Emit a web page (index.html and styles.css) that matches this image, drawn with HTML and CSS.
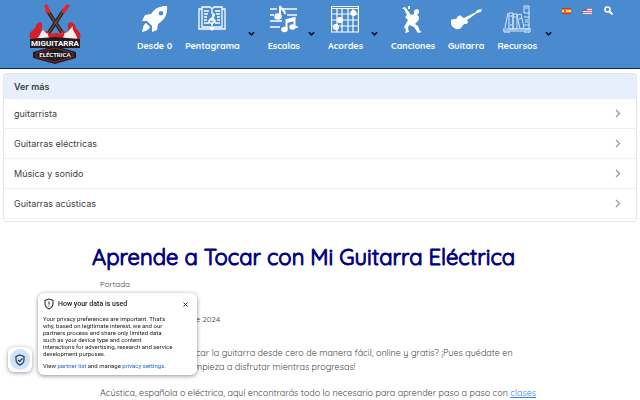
FILE: index.html
```html
<!DOCTYPE html>
<html lang="es">
<head>
  <meta charset="UTF-8">
  <meta name="viewport" content="width=device-width, initial-scale=1">
  <title>Aprende a Tocar con Mi Guitarra Eléctrica</title>
  <link rel="stylesheet" href="styles.css">
</head>
<body>

  <!-- Cabecera -->
  <header class="header">
    <a class="logo" href="#" aria-label="Mi Guitarra Eléctrica">
      <svg width="56" height="62" viewBox="0 0 56 62">
        <path d="M20 7 38 34M37 7 19 34" stroke="#30231f" stroke-width="4"/>
        <path d="M20 7 38 34M37 7 19 34" stroke="#756052" stroke-width="1"/>
        <path d="m17 2 3-1 4 8-4 2zM34 8l6-7 3 2-6 8z" fill="#e32632"/>
        <path d="M3 35c-2-5 2-7 5-10 1-5 6-8 7-4 1 4-2 6 1 8l5-1 3 10-18 3z" fill="#d71f2b"/>
        <path d="M53 35c2-5-2-7-4-10-1-5-6-8-8-4-1 4 2 6-1 8l-5-1-3 10 18 3z" fill="#d71f2b"/>
        <path d="M10 35c3-1 3-6 6-8l3 3 9 2 9-2c5 0 6-5 9-7-2 5 5 8 4 14z" fill="#f2efef"/>
        <path d="m20 29 4 2 5-1 5 1 4-2-2 6H22z" fill="#d71f2b"/>
        <path d="M6 49 28 43l21 6v6l-21 6-22-6z" fill="#211b20"/>
        <path d="m9 50 19-5 18 5v4l-18 5-19-5z" fill="none" stroke="#8a272d"/>
        <path d="M3 36 28 34l25 2v9H3z" fill="#211b20"/>
        <text class="logo-name" x="28" y="43" text-anchor="middle">MIGUITARRA</text>
        <text class="logo-sub" x="28" y="54" text-anchor="middle">ELÉCTRICA</text>
      </svg>
    </a>

    <nav class="nav">
      <a class="nav-item" href="#">
        <svg viewBox="0 0 28 28" fill="#fff"><path d="M26 1c1 9-3 14-9 18l-1 6-5 2v-6l-5-5H1l3-6 6-1C14 3 19 1 26 1zM20 6a2.300 2.300 0 1 0 0 4.600A2.300 2.300 0 0 0 20 6zM5 18l4 4c-1 3-4 4-8 5 1-4 1-7 4-9z" fill-rule="evenodd"/></svg>
        <span>Desde 0</span>
      </a>
      <div class="nav-group">
        <a class="nav-item" href="#">
          <svg viewBox="0 0 28 28" fill="none" stroke="#fff" stroke-width="1.300"><path d="M4 4H1v20h11l2 1 2-1h11V4h-3M4 22V2h8l2 2 2-2h8v20h-8l-2 2-2-2zM14 4v5M14 19v5M6 6h5M6 9h4M6 12h3M6 15h3M6 18h5M17 6h5M18 9h4M19 12h3M19 15h3M17 18h5"/><path d="M13 19c3 0 3-2 2-7-1-4 2-4 1-1-1 2-6 3-5 6 1 2 6 1 6-1s-4-2-4 0" stroke-width="1.500"/></svg>
          <span>Pentagrama</span>
        </a>
        <button class="toggle" aria-label="Abrir Pentagrama"><svg viewBox="0 0 8 6"><path d="m1 1 3 3 3-3"/></svg></button>
      </div>
      <div class="nav-group">
        <a class="nav-item" href="#">
          <svg viewBox="0 0 28 28" fill="none" stroke="#fff" stroke-width="1.500"><path d="M0 4h7M13 4h14M0 10h4M17 10h10M0 16h12M0 22h10M25 22h3"/><path d="M10 11V1c1 4 5 3 5 8M16.500 24v-9l8-2v9M16.500 17l8-2" stroke-width="2"/><ellipse cx="8" cy="11.500" rx="3" ry="2.500" fill="#fff"/><ellipse cx="14.500" cy="24.500" rx="2.500" ry="2" fill="#fff"/><ellipse cx="22.500" cy="22" rx="2.500" ry="2" fill="#fff"/></svg>
          <span>Escalas</span>
        </a>
        <button class="toggle" aria-label="Abrir Escalas"><svg viewBox="0 0 8 6"><path d="m1 1 3 3 3-3"/></svg></button>
      </div>
      <div class="nav-group">
        <a class="nav-item" href="#">
          <svg viewBox="0 0 28 28" fill="none" stroke="#fff"><path d="M0 1.500h28M0 3.500h28M.5 1v26h27V1M6 3v24M11 3v24M17 3v24M22 3v24M0 9h28M0 15h28M0 21h28" stroke-width="1.200"/><g fill="#fff"><circle cx="22.500" cy="8" r="2.700"/><circle cx="9" cy="15" r="2.700"/><circle cx="5" cy="22" r="2.700"/></g></svg>
          <span>Acordes</span>
        </a>
        <button class="toggle" aria-label="Abrir Acordes"><svg viewBox="0 0 8 6"><path d="m1 1 3 3 3-3"/></svg></button>
      </div>
      <a class="nav-item" href="#">
        <svg viewBox="0 0 28 28" fill="#fff"><path d="m7 3 5 7 3-1V6l2-2 3 1v3l-2 2c2 1 3 3 1 6l-3 3 3 2 2 5 2 1-4 1-4-6-5-2-1 3 1 4-4 1 1-3-2-3 4-7-3-3 2-2-3-6z"/><path d="m3 4 2-2 2 1-2 1zM9 1h2v3H9z"/></svg>
        <span>Canciones</span>
      </a>
      <a class="nav-item" href="#">
        <svg class="wide" viewBox="0 0 32 28" fill="#fff"><path d="m14 13 12-6 1-2 5-1-1 3-4 1-10 7c2 2 1 4-2 4s-2 4-6 5c-5 1-9-4-8-8 0-3 5-1 6-3 1-3 4-3 5-1z"/></svg>
        <span>Guitarra</span>
      </a>
      <div class="nav-group">
        <a class="nav-item" href="#">
          <svg viewBox="0 0 28 28" fill="none" stroke="#d7eaff" stroke-width="1"><path d="M0 24h28v2H0zM2 26v2h4v-2M22 26v2h4v-2M6 8h4v16H6zM10 9h4v15h-4zM2 23 5 8M14 10l4-1 3 14-4 1zM16 14l3-1M11 12h2M7 11h2M7 20h2M21 8h5v16h-5M21 12h5M21 20h5M21 8V1h5v7M22 3h3M22 15h3M22 17h3"/></svg>
          <span>Recursos</span>
        </a>
        <button class="toggle" aria-label="Abrir Recursos"><svg viewBox="0 0 8 6"><path d="m1 1 3 3 3-3"/></svg></button>
      </div>
    </nav>

    <div class="tools">
      <a href="#" aria-label="Español"><svg width="9" height="6" viewBox="0 0 9 6"><path fill="#d52b2b" d="M0 0h9v6H0z"/><path fill="#ffd33d" d="M0 1.500h9v3H0z"/><path fill="#b9652b" d="M2 2h2v2H2z"/></svg></a>
      <a href="#" aria-label="English"><svg width="9" height="6" viewBox="0 0 9 6"><path fill="#f3dfe4" d="M0 0h9v6H0z"/><path stroke="#d76b7d" d="M0 .5h9M0 2.500h9M0 4.500h9"/><path fill="#6677b5" d="M0 0h4v3H0z"/></svg></a>
      <button class="search" aria-label="Buscar"><svg width="9" height="9" viewBox="0 0 9 9"><circle cx="3.500" cy="3.500" r="2.500" fill="none" stroke="#fff" stroke-width="1.600"/><path d="m5.500 5.500 3 3" stroke="#fff" stroke-width="2"/></svg></button>
    </div>
  </header>

  <!-- Ver más -->
  <section class="related">
    <h2>Ver más</h2>
    <a href="#">guitarrista <svg viewBox="0 0 6 9"><path d="m1 1 3.500 3.500L1 8"/></svg></a>
    <a href="#">Guitarras eléctricas <svg viewBox="0 0 6 9"><path d="m1 1 3.500 3.500L1 8"/></svg></a>
    <a href="#">Música y sonido <svg viewBox="0 0 6 9"><path d="m1 1 3.500 3.500L1 8"/></svg></a>
    <a href="#">Guitarras acústicas <svg viewBox="0 0 6 9"><path d="m1 1 3.500 3.500L1 8"/></svg></a>
  </section>

  <!-- Contenido -->
  <main class="content">
    <h1>Aprende a Tocar con Mi Guitarra Eléctrica</h1>
    <div class="article">
      <div class="crumb">Portada</div>
      <div class="date">Actualizado: septiembre de 2024</div>
      <p>¿Quieres aprender a tocar la guitarra desde cero de manera fácil, online y gratis? ¡Pues quédate en MiGuitarraEléctrica y empieza a disfrutar mientras progresas!</p>
      <p>Acústica, española o eléctrica, aquí encontrarás todo lo necesario para aprender paso a paso con <a href="#">clases</a></p>
    </div>
  </main>

  <!-- Privacidad -->
  <button class="privacy-btn" aria-label="Privacidad">
    <span><svg width="10" height="12" viewBox="0 0 10 12" fill="none" stroke="#263a55" stroke-width="1.200"><path d="m5 1 4 1.500V6c0 2.500-2 4-4 5-2-1-4-2.500-4-5V2.500z"/><path d="m3 6 1.500 1.500L7.500 4.500"/></svg></span>
  </button>
  <aside class="privacy">
    <div class="privacy-head">
      <svg width="10" height="12" viewBox="0 0 10 12" fill="none" stroke="#333" stroke-width="1.100"><path d="m5 1 4 1.500V6c0 2.500-2 4-4 5-2-1-4-2.500-4-5V2.500zM5 3.500v3M5 7.500v1"/></svg>
      <h2>How your data is used</h2>
      <button aria-label="Cerrar"><svg width="5" height="5" viewBox="0 0 5 5"><path d="m.5.5 4 4m0-4-4 4" stroke="#333" stroke-width="1"/></svg></button>
    </div>
    <p>Your privacy preferences are important. That's why, based on legitimate interest, we and our partners process and share only limited data such as your device type and content interactions for advertising, research and service development purposes.</p>
    <p>View <a href="#">partner list</a> and manage <a href="#">privacy settings</a>.</p>
  </aside>

</body>
</html>
```
FILE: styles.css
```css
* { box-sizing: border-box; }
body {
  margin: 0;
  background: #fff;
  color: #444;
  font-family: Quicksand, Lato, sans-serif;
}
a { color: inherit; text-decoration: none; }
button { border: 0; padding: 0; background: none; cursor: pointer; }
svg { display: block; }

.header {
  display: flex;
  align-items: flex-start;
  min-height: 69px;
  padding: 3px 27px 0 27px;
  background: #4a8bd0;
  border-bottom: 1px solid #002080;
}
.logo-name {
  font: bold 8px Roboto, sans-serif;
  fill: #fff;
}
.logo-sub {
  font: bold 6px Lato, sans-serif;
  fill: #fff;
}

.nav {
  display: flex;
  flex: 1;
  gap: 13px;
  padding: 2px 0 0 54px;
}
.nav-group { display: flex; gap: 8px; }
.nav-item {
  display: flex;
  flex-direction: column;
  align-items: center;
  gap: 5px;
  color: #fff;
  font-size: 9px;
  font-weight: bold;
  line-height: 16px;
  white-space: nowrap;
}
.nav-item svg { width: 28px; height: 28px; }
.nav-item .wide { width: 32px; }
.toggle { align-self: flex-start; padding-top: 26px; }
.toggle svg {
  width: 7px;
  height: 6px;
  fill: none;
  stroke: #071525;
  stroke-width: 2;
}
.tools {
  display: flex;
  align-items: center;
  gap: 12px;
  padding-top: 3px;
}

.related {
  margin: 4px 3px 0;
  padding-bottom: 2px;
  border: 1px solid #e4e6eb;
  border-radius: 3px;
  color: #3c4043;
  font-family: "Google Sans", Inter, sans-serif;
  font-size: 9px;
}
.related h2 {
  margin: 0;
  padding: 0 10px;
  background: #e8effc;
  font-size: 9px;
  font-weight: 600;
  line-height: 25px;
}
.related a {
  display: flex;
  align-items: center;
  justify-content: space-between;
  height: 30px;
  padding: 0 15px 0 10px;
  border-bottom: 1px solid #f1f1f1;
}
.related svg {
  width: 6px;
  height: 9px;
  fill: none;
  stroke: #999;
  stroke-width: 1.3;
}

.content { padding: 19px 92px 0; }
.content h1 {
  margin: 0;
  color: #000080;
  font-size: 22px;
  font-weight: 400;
  line-height: 32px;
  white-space: nowrap;
  -webkit-text-stroke: 1px #000080;
}
.article { padding: 4px 0 0 8px; }
.crumb, .date { font-size: 8px; line-height: 14px; }
.date { margin: 21px 0 20px; }
.article p {
  margin: 0 0 12px;
  font-size: 9px;
  line-height: 14px;
}
.article p:last-child { margin: 0; }
.article p a { color: #2f86e8; text-decoration: underline; }

.privacy-btn {
  position: fixed;
  left: 8px;
  bottom: 28px;
  width: 24px;
  height: 25px;
  padding: 2px;
  border-radius: 6px;
  background: #fff;
  box-shadow: 0 1px 4px rgba(0,0,0,0.4);
}
.privacy-btn span {
  display: flex;
  align-items: center;
  justify-content: center;
  height: 21px;
  border-radius: 50%;
  background: #cfe1fb;
}
.privacy {
  position: fixed;
  left: 38px;
  bottom: 25px;
  width: 159px;
  padding: 5px 5px 6px;
  border-radius: 6px;
  background: #fff;
  box-shadow: 0 1px 4px rgba(0,0,0,0.45);
  color: #222;
  font-family: Roboto, sans-serif;
  font-size: 6px;
  line-height: 7px;
}
.privacy-head {
  display: flex;
  align-items: center;
  gap: 4px;
  padding: 0 4px 0 1px;
}
.privacy-head h2 {
  flex: 1;
  margin: 0;
  font-size: 7px;
  font-weight: 500;
  line-height: 12px;
}
.privacy p { margin: 5px 0; padding-right: 18px; }
.privacy p:last-child { margin-bottom: 0; }
.privacy a { color: #1967d2; }
```
